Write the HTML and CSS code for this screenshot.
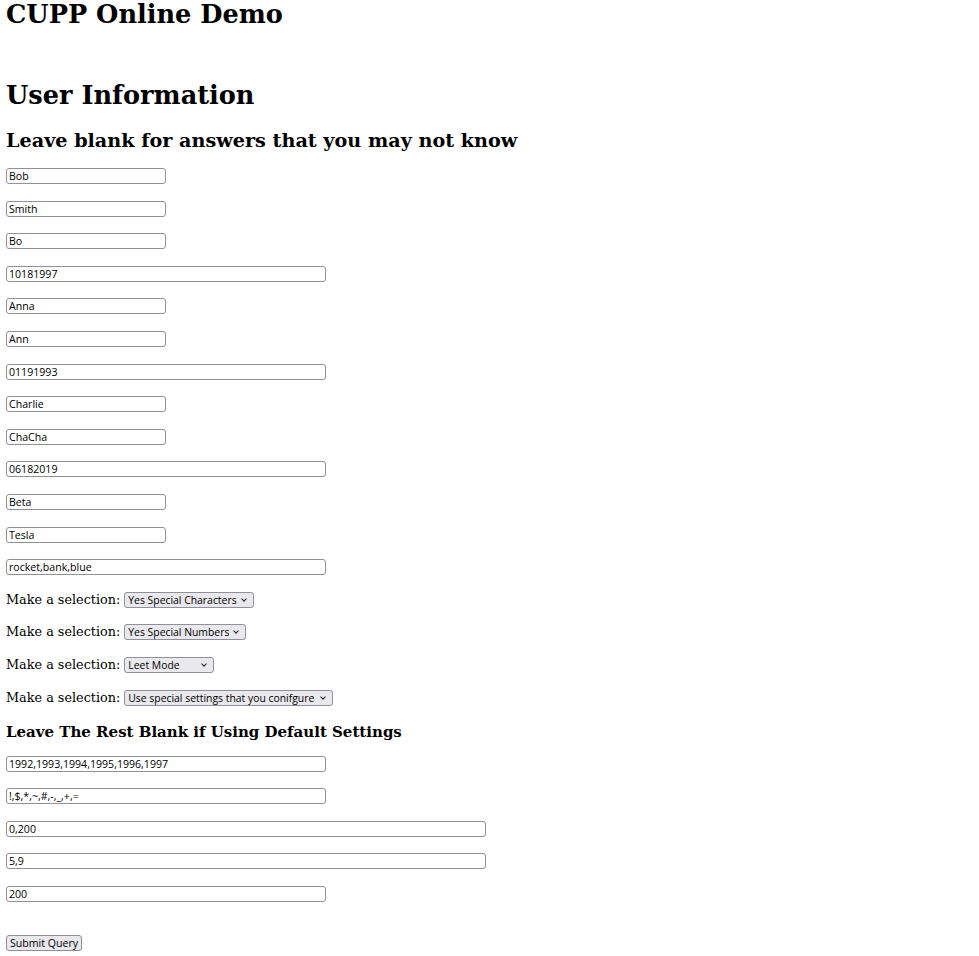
FILE: index.html
```html
<!DOCTYPE html>
<html>
<head>
<meta charset="utf-8">
<title>CUPP Online Demo</title>
<link rel="stylesheet" href="styles.css">
</head>
<body>
<h1 class="title">CUPP Online Demo</h1>
<form class="form">
  <h1 class="section">User Information</h1>
  <h2 class="sub">Leave blank for answers that you may not know</h2>
  <div class="fields">
    <input class="field w1" type="text" value="Bob">
    <input class="field w1" type="text" value="Smith">
    <input class="field w1" type="text" value="Bo">
    <input class="field w2" type="text" value="10181997">
    <input class="field w1" type="text" value="Anna">
    <input class="field w1" type="text" value="Ann">
    <input class="field w2" type="text" value="01191993">
    <input class="field w1" type="text" value="Charlie">
    <input class="field w1" type="text" value="ChaCha">
    <input class="field w2" type="text" value="06182019">
    <input class="field w1" type="text" value="Beta">
    <input class="field w1" type="text" value="Tesla">
    <input class="field w2" type="text" value="rocket,bank,blue">
    <label class="select-row">Make a selection: <span class="select s1"><select><option>Yes Special Characters</option></select></span></label>
    <label class="select-row">Make a selection: <span class="select s2"><select><option>Yes Special Numbers</option></select></span></label>
    <label class="select-row">Make a selection: <span class="select s3"><select><option>Leet Mode</option></select></span></label>
    <label class="select-row">Make a selection: <span class="select s4"><select><option>Use special settings that you conifgure</option></select></span></label>
  </div>
  <h3 class="sub3">Leave The Rest Blank if Using Default Settings</h3>
  <div class="fields">
    <input class="field w2" type="text" value="1992,1993,1994,1995,1996,1997">
    <input class="field w2" type="text" value="!,$,*,~,#,-,_,+,=">
    <input class="field w3" type="text" value="0,200">
    <input class="field w3" type="text" value="5,9">
    <input class="field w2" type="text" value="200">
  </div>
  <div class="actions">
    <button class="submit" type="button">Submit Query</button>
  </div>
</form>
</body>
</html>
```

FILE: styles.css
```css
html, body {
  background: #ffffff;
}
body {
  margin: 0;
  padding: 0 6px;
  font-family: "DejaVu Serif", serif;
  font-size: 12.8px;
  color: #000000;
}
.title {
  font-size: 25.6px;
  font-weight: bold;
  line-height: 28px;
  margin: 0;
}
.form {
  margin: 52.8px 0 0 0;
}
.section {
  font-size: 25.6px;
  font-weight: bold;
  line-height: 29.8px;
  margin: 0;
}
.sub {
  font-size: 19.2px;
  font-weight: bold;
  line-height: 22.4px;
  margin: 19px 0 16px 0;
}
.sub3 {
  font-size: 15px;
  font-weight: bold;
  line-height: 17.4px;
  margin: 18.3px 0 14.5px 0;
}
.fields {
  display: flex;
  flex-direction: column;
  align-items: flex-start;
  gap: 16.6px;
}
.field {
  box-sizing: border-box;
  height: 16px;
  border: 1px solid #8f8f9d;
  border-radius: 3px;
  padding: 0 2px;
  margin: 0;
  font-family: "Open Sans", "Noto Sans", sans-serif;
  font-size: 10.6px;
  color: #000000;
  background: #ffffff;
}
.w1 { width: 160px; }
.w2 { width: 320px; }
.w3 { width: 480px; }
.select-row {
  display: flex;
  align-items: baseline;
  height: 16px;
  gap: 4px;
  white-space: nowrap;
}
.select {
  position: relative;
  display: inline-block;
}
.select select {
  appearance: none;
  -webkit-appearance: none;
  box-sizing: border-box;
  height: 16px;
  border: 1px solid #8f8f9d;
  border-radius: 3px;
  background: #e9e9ed;
  padding: 0 16px 0 3px;
  margin: 0;
  font-family: "Open Sans", "Noto Sans", sans-serif;
  font-size: 10.4px;
  color: #000000;
}
.select::after {
  content: "";
  position: absolute;
  right: 8px;
  top: 5px;
  width: 3px;
  height: 3px;
  border-right: 1px solid #222;
  border-bottom: 1px solid #222;
  transform: rotate(45deg);
  pointer-events: none;
}
.s1 select { width: 130px; }
.s2 select { width: 122px; }
.s3 select { width: 90px; }
.s4 select { width: 209px; }
.actions {
  margin-top: 33px;
}
.submit {
  box-sizing: border-box;
  height: 16px;
  width: 76px;
  border: 1px solid #8f8f9d;
  border-radius: 3px;
  background: #e9e9ed;
  padding: 0 2px;
  margin: 0;
  white-space: nowrap;
  font-family: "Open Sans", "Noto Sans", sans-serif;
  font-size: 10.6px;
  line-height: 14px;
  color: #000000;
}
```
